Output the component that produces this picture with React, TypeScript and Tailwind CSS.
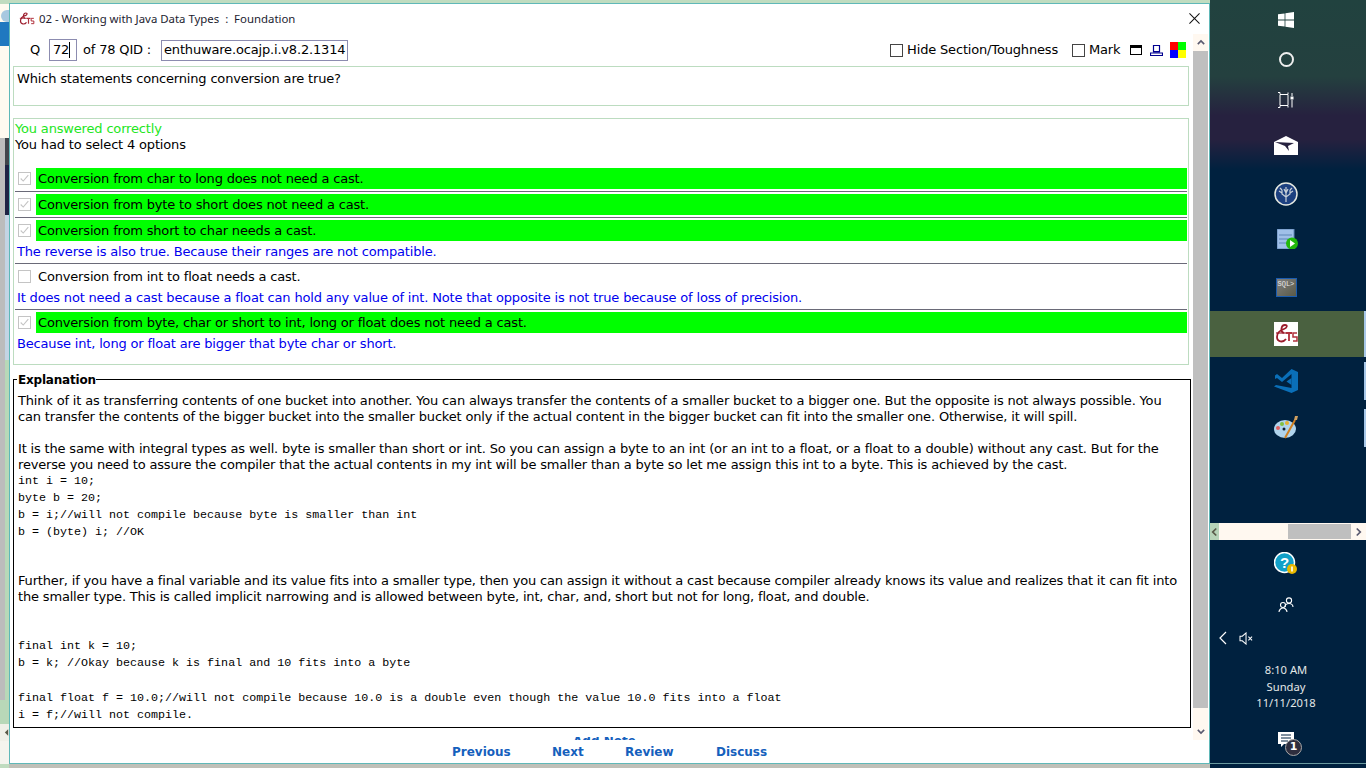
import React from "react";

const ui = { fontFamily: '"DejaVu Sans", sans-serif' };

function Ets({ className = "" }: { className?: string }) {
  return (
    <svg viewBox="0 0 24 24" className={className}>
      <path d="M10 11c-4-1-3-8 1-8 3 0 2 3-1 4-3 1-7 3-7 8 0 5 6 6 9 2" fill="none" stroke="#9c1c2c" strokeWidth="1.8" />
      <path d="M2 11h10" stroke="#9c1c2c" strokeWidth="1.2" />
      <path d="M12 11h6M15 11v8" stroke="#b0303c" strokeWidth="1.8" fill="none" />
      <path d="M23 11h-4v4h4v4h-4" stroke="#b0303c" strokeWidth="1.5" fill="none" />
    </svg>
  );
}

function OptionRow({ text, correct, note, rule = true }: { text: string; correct?: boolean; note?: string; rule?: boolean }) {
  return (
    <div>
      <div className="flex h-[21px] items-center pl-[3px]">
        <span className="flex h-[13px] w-[13px] flex-none items-center justify-center border border-[#c4c4c4] bg-white">
          {correct && (
            <svg viewBox="0 0 13 13" className="h-[11px] w-[11px]">
              <path d="M2 6.5l3 3 6-7" fill="none" stroke="#c4c4c4" strokeWidth="1.3" />
            </svg>
          )}
        </span>
        <span className={`ml-[5px] flex h-[21px] flex-1 items-center pl-[2px] ${correct ? "bg-[#00ff00]" : ""}`}>{text}</span>
      </div>
      {note && <div className="flex h-[21px] items-center pl-[2px] text-[#0000ee]">{note}</div>}
      {rule && <div className={`h-px bg-[#6a6a78] ${note ? "mt-[1px]" : "mt-[2px]"} mb-[2px]`} />}
    </div>
  );
}

function Code({ children }: { children: React.ReactNode }) {
  return <div className="h-[17px] whitespace-pre font-['Liberation_Mono',monospace] text-[11.68px] leading-[17px] tracking-normal">{children}</div>;
}

function Para({ lines }: { lines: string[] }) {
  return (
    <>
      {lines.map((l) => (
        <div key={l} className="h-[16px] whitespace-nowrap leading-[16px]">{l}</div>
      ))}
    </>
  );
}

function TrayIcon({ children, className = "" }: { children: React.ReactNode; className?: string }) {
  return <div className={`flex items-center justify-center pr-[4px] ${className}`}>{children}</div>;
}

function Taskbar() {
  return (
    <div className="relative flex h-[768px] w-[156px] flex-none flex-col bg-[#00213f] text-white" style={ui}>
      <div className="absolute right-0 top-[311px] h-[46px] w-[2px] bg-[#a8c8e8]" />
      <div className="absolute right-0 top-[362px] h-[38px] w-[2px] bg-[#a8c8e8]" />
      <div className="absolute right-0 top-[409px] h-[38px] w-[2px] bg-[#a8c8e8]" />
      <div className="absolute inset-x-0 bottom-[4px] h-px bg-[#6a9aa0]" />
      <div className="flex h-[170px] flex-none flex-col bg-[linear-gradient(#21423f_0%,#24403f_45%,#26213f_68%,#26213f_82%,#00213f_100%)]">
        <TrayIcon className="mt-[12px] h-[16px]">
          <svg viewBox="0 0 16 16" className="h-[16px] w-[16px]" fill="#fff">
            <path d="M0 2.3l6.6-.9v6.2H0zM7.4 1.3L16 0v7.6H7.4zM0 8.4h6.6v6.2L0 13.7zM7.4 8.4H16V16l-8.6-1.2z" />
          </svg>
        </TrayIcon>
        <TrayIcon className="mt-[24px] h-[15px]">
          <div className="h-[15px] w-[15px] rounded-full border-2 border-[#eeeeee]" />
        </TrayIcon>
        <TrayIcon className="mt-[25px] h-[16px]">
          <svg viewBox="0 0 16 16" className="h-[16px] w-[16px]" fill="none" stroke="#fff" strokeWidth="1">
            <path d="M0 .5h2v2H10v-2M2 3v10M10 3v10M0 15.5h2v-2H10v2" />
            <path d="M14 1v3M14 8v7.500" />
            <rect x="12.500" y="4.500" width="3" height="3" fill="#fff" stroke="none" />
          </svg>
        </TrayIcon>
        <TrayIcon className="mt-[28px] h-[19px]">
          <svg viewBox="0 0 24 19" className="h-[19px] w-[24px]">
            <path d="M0 6L12 0l12 6v13H0z" fill="#fff" />
            <path d="M1 6l19 1-6 3 1 5-4-5z" fill="#26213f" />
          </svg>
        </TrayIcon>
      </div>
      <TrayIcon className="mt-[12px] h-[24px]">
        <svg viewBox="0 0 24 24" className="h-[24px] w-[24px]">
          <circle cx="12" cy="12" r="11" fill="#1c4080" stroke="#e4e8e0" strokeWidth="1.5" />
          <path d="M12 20v-10M12 15l-4-3v-4M12 15l4-3v-4M12 11V5M12 11l-2-4M12 11l2-4M8 11L5 9M16 11l3-2M8 8L6 6M16 8l2-2" stroke="#c8d0d8" strokeWidth="1.2" fill="none" />
        </svg>
      </TrayIcon>
      <TrayIcon className="mt-[23px] h-[20px]">
        <svg viewBox="0 0 22 20" className="ml-[3px] h-[20px] w-[22px]">
          <rect x="0" y="0" width="17" height="20" fill="#a0c0e8" stroke="#5f86b8" />
          <path d="M2 6h13M2 10h13M2 14h13" stroke="#5f86b8" />
          <circle cx="15" cy="14.5" r="6" fill="#22b80a" />
          <path d="M13 11l5 3.5-5 3.500z" fill="#fff" />
        </svg>
      </TrayIcon>
      <TrayIcon className="mt-[29px] h-[19px]">
        <div className="h-[19px] w-[21px] border border-[#1b5cb0] bg-gradient-to-br from-[#808080] to-[#5a5a48] pl-[1px] font-['Liberation_Mono',monospace] text-[7px] leading-[10px] text-[#e8e8e8]">SQL&gt;</div>
      </TrayIcon>
      <div className="mt-[14px] flex h-[46px] flex-none items-center justify-center bg-[#4a6140] pr-[4px]">
        <div className="h-[24px] w-[24px] bg-white">
          <Ets className="h-[24px] w-[24px]" />
        </div>
      </div>
      <TrayIcon className="mt-[12px] h-[24px]">
        <svg viewBox="0 0 24 24" className="h-[24px] w-[24px]">
          <path d="M17.500 0L24 3v18l-6.500 3L0 17.500 2 16l15.500 3V5L8 13 3 9 1 10V6.500L3 5l5 4z" fill="#0a6fb8" />
          <path d="M17.500 9l-5 3.500 5 3.500z" fill="#0a6fb8" />
        </svg>
      </TrayIcon>
      <TrayIcon className="mt-[22px] h-[24px]">
        <svg viewBox="0 0 24 24" className="h-[24px] w-[24px]">
          <ellipse cx="11" cy="14" rx="11" ry="9" fill="#b0d4ec" />
          <circle cx="4" cy="13" r="2" fill="#e06060" />
          <circle cx="8" cy="9" r="2" fill="#80c040" />
          <circle cx="13" cy="8" r="2" fill="#e8b030" />
          <circle cx="10" cy="14" r="1.5" fill="#102030" />
          <path d="M11 23L21 5" stroke="#d08020" strokeWidth="2" />
          <path d="M20 5l1-4 3 0-1 4z" fill="#d0a060" />
        </svg>
      </TrayIcon>

      <div className="mt-[84px] flex h-[17px] flex-none items-center justify-between bg-[#fff8f0] text-[#5a5a70]">
        <span className="flex h-[17px] w-[9px] items-center justify-center bg-[#b8d4b8]">
          <svg viewBox="0 0 8 10" className="h-[10px] w-[7px]"><path d="M6 1L2 5l4 4" fill="none" stroke="#5a5a48" strokeWidth="2" /></svg>
        </span>
        <span className="ml-[64px] h-[15px] w-[63px] bg-[#bfbfbf]" />
        <svg viewBox="0 0 8 10" className="mr-[4px] h-[10px] w-[7px]"><path d="M2 1l4 4-4 4" fill="none" stroke="#5a5a70" strokeWidth="2" /></svg>
      </div>

      <TrayIcon className="mt-[12px] h-[24px]">
        <svg viewBox="0 0 24 24" className="h-[24px] w-[24px]">
          <circle cx="10.5" cy="10.5" r="10" fill="#12a0c8" stroke="#fff" strokeWidth="1.5" />
          <text x="10.5" y="16" textAnchor="middle" fontSize="15" fontWeight="700" fill="#fff" fontFamily="Liberation Sans">?</text>
          <circle cx="18" cy="17" r="5" fill="#e8b800" />
          <rect x="17.2" y="14.500" width="1.6" height="5" fill="#fff" />
        </svg>
      </TrayIcon>
      <TrayIcon className="mt-[21px] h-[16px]">
        <svg viewBox="0 0 16 16" className="h-[16px] w-[16px]" fill="none" stroke="#fff" strokeWidth="1.1">
          <circle cx="11" cy="3.500" r="2.600" /><path d="M7 10c0-2 2-3.500 4-3.500s4 1.500 4 3.500" />
          <circle cx="5" cy="8" r="2.500" /><path d="M1 15c0-2 2-4 4-4s4 2 4 4" />
        </svg>
      </TrayIcon>
      <div className="mt-[17px] flex h-[16px] flex-none items-center pl-[9px]">
        <svg viewBox="0 0 8 14" className="h-[14px] w-[8px]" fill="none" stroke="#fff" strokeWidth="1.2"><path d="M7 1L1 7l6 6" /></svg>
        <svg viewBox="0 0 16 14" className="ml-[12px] h-[13px] w-[15px]" fill="none" stroke="#fff" strokeWidth="1.1"><path d="M1 4.500h2.500L7.500 1v12L3.500 9.500H1z" /><path d="M10 5l4 4M14 5l-4 4" /></svg>
      </div>
      <div className="mt-[16px] flex-none pr-[4px] text-center font-['Noto_Sans',sans-serif] text-[11.2px] leading-[16.5px] text-[#e4e8e8]">
        <div>8:10 AM</div>
        <div>Sunday</div>
        <div>11/11/2018</div>
      </div>
      <div className="relative mt-[20px] flex h-[24px] flex-none justify-center pr-[4px]">
        <svg viewBox="0 0 16 16" className="h-[16px] w-[16px]"><path d="M0 0h16v12H6l-3 3v-3H0z" fill="#fff" /><path d="M3 3h10M3 6h10M3 9h7" stroke="#00213f" /></svg>
        <div className="absolute left-[75px] top-[7px] flex h-[17px] w-[17px] items-center justify-center rounded-full border border-[#a8a8a8] bg-[#2e2e3e] text-[11px] font-bold">1</div>
      </div>
    </div>
  );
}

function LeftStrip() {
  return (
    <div className="flex h-[768px] w-[9px] flex-none flex-col bg-[#fffaf0]">
      <div className="h-[4px] flex-none bg-[#c0dcc0]" />
      <div className="flex h-[18px] flex-none items-end justify-end">
        <span className="h-[12px] w-[8px] rounded-l-full bg-[#a8c8e0]" />
      </div>
      <div className="h-[24px] flex-none bg-[#2078c0]" />
      <div className="h-[92px] flex-none bg-[#fffaf0]" />
      <div className="flex h-[562px] flex-none">
        <div className="w-[5px] bg-[#bcbcbc]" />
        <div className="flex w-[4px] flex-col">
          <div className="h-[27px] bg-[#40444a]" />
          <div className="h-[50px] bg-[#1e2244]" />
          <div className="h-[145px] bg-[#c4d4e4]" />
          <div className="flex-1 bg-[#b8d8b8]" />
        </div>
      </div>
      <div className="h-[24px] flex-none bg-[#b8d8b8]" />
      <div className="flex h-[17px] flex-none items-center justify-end bg-[#f0f0e8]">
        <svg viewBox="0 0 6 10" className="h-[9px] w-[5px]"><path d="M5 1L1 5l4 4z" fill="#5a5a48" /></svg>
      </div>
      <div className="h-[23px] flex-none bg-[#f4f4ee]" />
      <div className="flex-1 bg-[#c0dcc0]" />
    </div>
  );
}

export default function App() {
  return (
    <div className="flex h-[768px] w-[1366px] overflow-hidden bg-[#c0c0b8]" style={ui}>
      <LeftStrip />
      <div className="flex w-[1201px] flex-none flex-col">
        <div className="h-[3px] flex-none bg-[#c0dcc0]" />
        <div className="flex h-[761px] flex-none flex-col border border-[#5fb8b8] bg-white text-[13px] leading-[16px] tracking-[-0.17px] text-black">
          <div className="flex h-[30px] flex-none items-center pl-[8px] pr-[8px]">
            <Ets className="h-[16px] w-[17px]" />
            <span className="ml-[4px] font-['Noto_Sans',sans-serif] text-[11.4px] tracking-normal text-[#1c1c30]">02 - Working with Java Data Types&nbsp;&nbsp;:&nbsp;&nbsp;Foundation</span>
            <svg viewBox="0 0 12 12" className="ml-auto mb-[2px] mr-[1px] h-[11px] w-[11px]"><path d="M.5.5l11 11M11.500.5l-11 11" stroke="#111" strokeWidth="1.1" /></svg>
          </div>
          <div className="flex h-[706px] flex-none">
            <div className="flex w-[1183px] flex-none flex-col pl-[3px]">
              <div className="flex h-[28px] flex-none items-center pl-[17px] pt-[4px]">
                <span className="w-[19px]">Q</span>
                <span className="flex h-[22px] w-[28px] items-center border border-[#8c8cb0] pl-[3px]">72<span className="h-[16px] w-px bg-black" /></span>
                <span className="ml-[6px] w-[78px] whitespace-nowrap">of 78 QID :</span>
                <span className="flex h-[21px] w-[187px] items-center whitespace-nowrap border border-[#8c8cb0] pl-[2px]">enthuware.ocajp.i.v8.2.1314</span>
                <span className="ml-auto h-[13px] w-[13px] border border-[#444]" />
                <span className="ml-[4px] whitespace-nowrap">Hide Section/Toughness</span>
                <span className="ml-[14px] h-[13px] w-[13px] border border-[#444]" />
                <span className="ml-[4px] w-[30px]">Mark</span>
                <svg viewBox="0 0 12 10" className="ml-[11px] h-[10px] w-[12px]"><rect x=".5" y=".5" width="11" height="9" fill="#fff" stroke="#000" /><rect width="12" height="3" fill="#000" /></svg>
                <svg viewBox="0 0 13 11" className="ml-[8px] h-[11px] w-[13px]" fill="none" stroke="#000090" strokeWidth="1.2"><path d="M3.500.5h6v6h-6zM.5 8h12v2.500H.5z" /><path d="M3 7h7" /></svg>
                <span className="ml-[7px] mr-[7px] grid h-[16px] w-[16px] grid-cols-2">
                  <span className="bg-[#ff0000]" /><span className="bg-[#00ff00]" /><span className="bg-[#0000ff]" /><span className="bg-[#ffff00]" />
                </span>
              </div>
              <div className="mt-[4px] h-[40px] w-[1176px] flex-none border border-[#bcdcc0] px-[3px] pt-[4px]">Which statements concerning conversion are true?</div>
              <div className="mt-[12px] flex h-[247px] w-[1176px] flex-none flex-col border border-[#bcdcc0] pl-[1px] pr-[1px] pt-[2px]">
                <div className="text-[#22e622]">You answered correctly</div>
                <div className="mb-[15px]">You had to select 4 options</div>
                <OptionRow text="Conversion from char to long does not need a cast." correct />
                <OptionRow text="Conversion from byte to short does not need a cast." correct />
                <OptionRow text="Conversion from short to char needs a cast." correct note="The reverse is also true. Because their ranges are not compatible." />
                <OptionRow text="Conversion from int to float needs a cast." note="It does not need a cast because a float can hold any value of int. Note that opposite is not true because of loss of precision." />
                <OptionRow text="Conversion from byte, char or short to int, long or float does not need a cast." correct rule={false} note="Because int, long or float are bigger that byte char or short." />
              </div>
              <div className="relative mt-[14px] h-[349px] w-[1178px] flex-none border border-t-0 border-black pl-[4px]">
                <div className="absolute left-0 top-0 h-px w-[3px] bg-black" />
                <div className="absolute left-[82px] right-0 top-0 h-px bg-black" />
                <div className="absolute left-[4px] top-[-7px] text-[12px] font-bold tracking-[-0.2px]">Explanation</div>
                <div className="pt-[14px]">
                  <Para lines={[
                    "Think of it as transferring contents of one bucket into another. You can always transfer the contents of a smaller bucket to a bigger one. But the opposite is not always possible. You",
                    "can transfer the contents of the bigger bucket into the smaller bucket only if the actual content in the bigger bucket can fit into the smaller one. Otherwise, it will spill.",
                  ]} />
                  <div className="h-[16px]" />
                  <Para lines={[
                    "It is the same with integral types as well. byte is smaller than short or int. So you can assign a byte to an int (or an int to a float, or a float to a double) without any cast. But for the",
                    "reverse you need to assure the compiler that the actual contents in my int will be smaller than a byte so let me assign this int to a byte. This is achieved by the cast.",
                  ]} />
                  <Code>int i = 10;</Code>
                  <Code>byte b = 20;</Code>
                  <Code>b = i;//will not compile because byte is smaller than int</Code>
                  <Code>b = (byte) i; //OK</Code>
                  <div className="h-[32px]" />
                  <Para lines={[
                    "Further, if you have a final variable and its value fits into a smaller type, then you can assign it without a cast because compiler already knows its value and realizes that it can fit into",
                    "the smaller type. This is called implicit narrowing and is allowed between byte, int, char, and, short but not for long, float, and double.",
                  ]} />
                  <div className="h-[33px]" />
                  <Code>final int k = 10;</Code>
                  <Code>b = k; //Okay because k is final and 10 fits into a byte</Code>
                  <div className="h-[18px]" />
                  <Code>final float f = 10.0;//will not compile because 10.0 is a double even though the value 10.0 fits into a float</Code>
                  <Code>i = f;//will not compile.</Code>
                </div>
              </div>
              <div className="ml-[560px] mt-[9px] h-[3px] flex-none overflow-hidden">
                <div className="mt-[-4px] whitespace-nowrap text-[12px] font-bold tracking-normal text-[#1560bd]">Add Note</div>
              </div>
            </div>
            <div className="flex w-[15px] flex-none flex-col bg-[#fff8f0]">
              <div className="flex h-[17px] flex-none items-center justify-center">
                <svg viewBox="0 0 10 8" className="h-[7px] w-[8px]"><path d="M1 6l4-4 4 4" fill="none" stroke="#5a5a70" strokeWidth="2" /></svg>
              </div>
              <div className="h-[657px] flex-none bg-[#bfbfbf]" />
              <div className="flex flex-1 items-center justify-center pt-[14px]">
                <svg viewBox="0 0 10 8" className="h-[7px] w-[8px]"><path d="M1 2l4 4 4-4" fill="none" stroke="#5a5a70" strokeWidth="2" /></svg>
              </div>
            </div>
          </div>
          <div className="flex flex-1 items-end pb-[3px] pl-[442px] text-[12px] font-bold tracking-normal text-[#1560bd]">
            <span className="w-[100px]">Previous</span>
            <span className="w-[73px]">Next</span>
            <span className="w-[91px]">Review</span>
            <span>Discuss</span>
          </div>
        </div>
      </div>
      <Taskbar />
    </div>
  );
}
